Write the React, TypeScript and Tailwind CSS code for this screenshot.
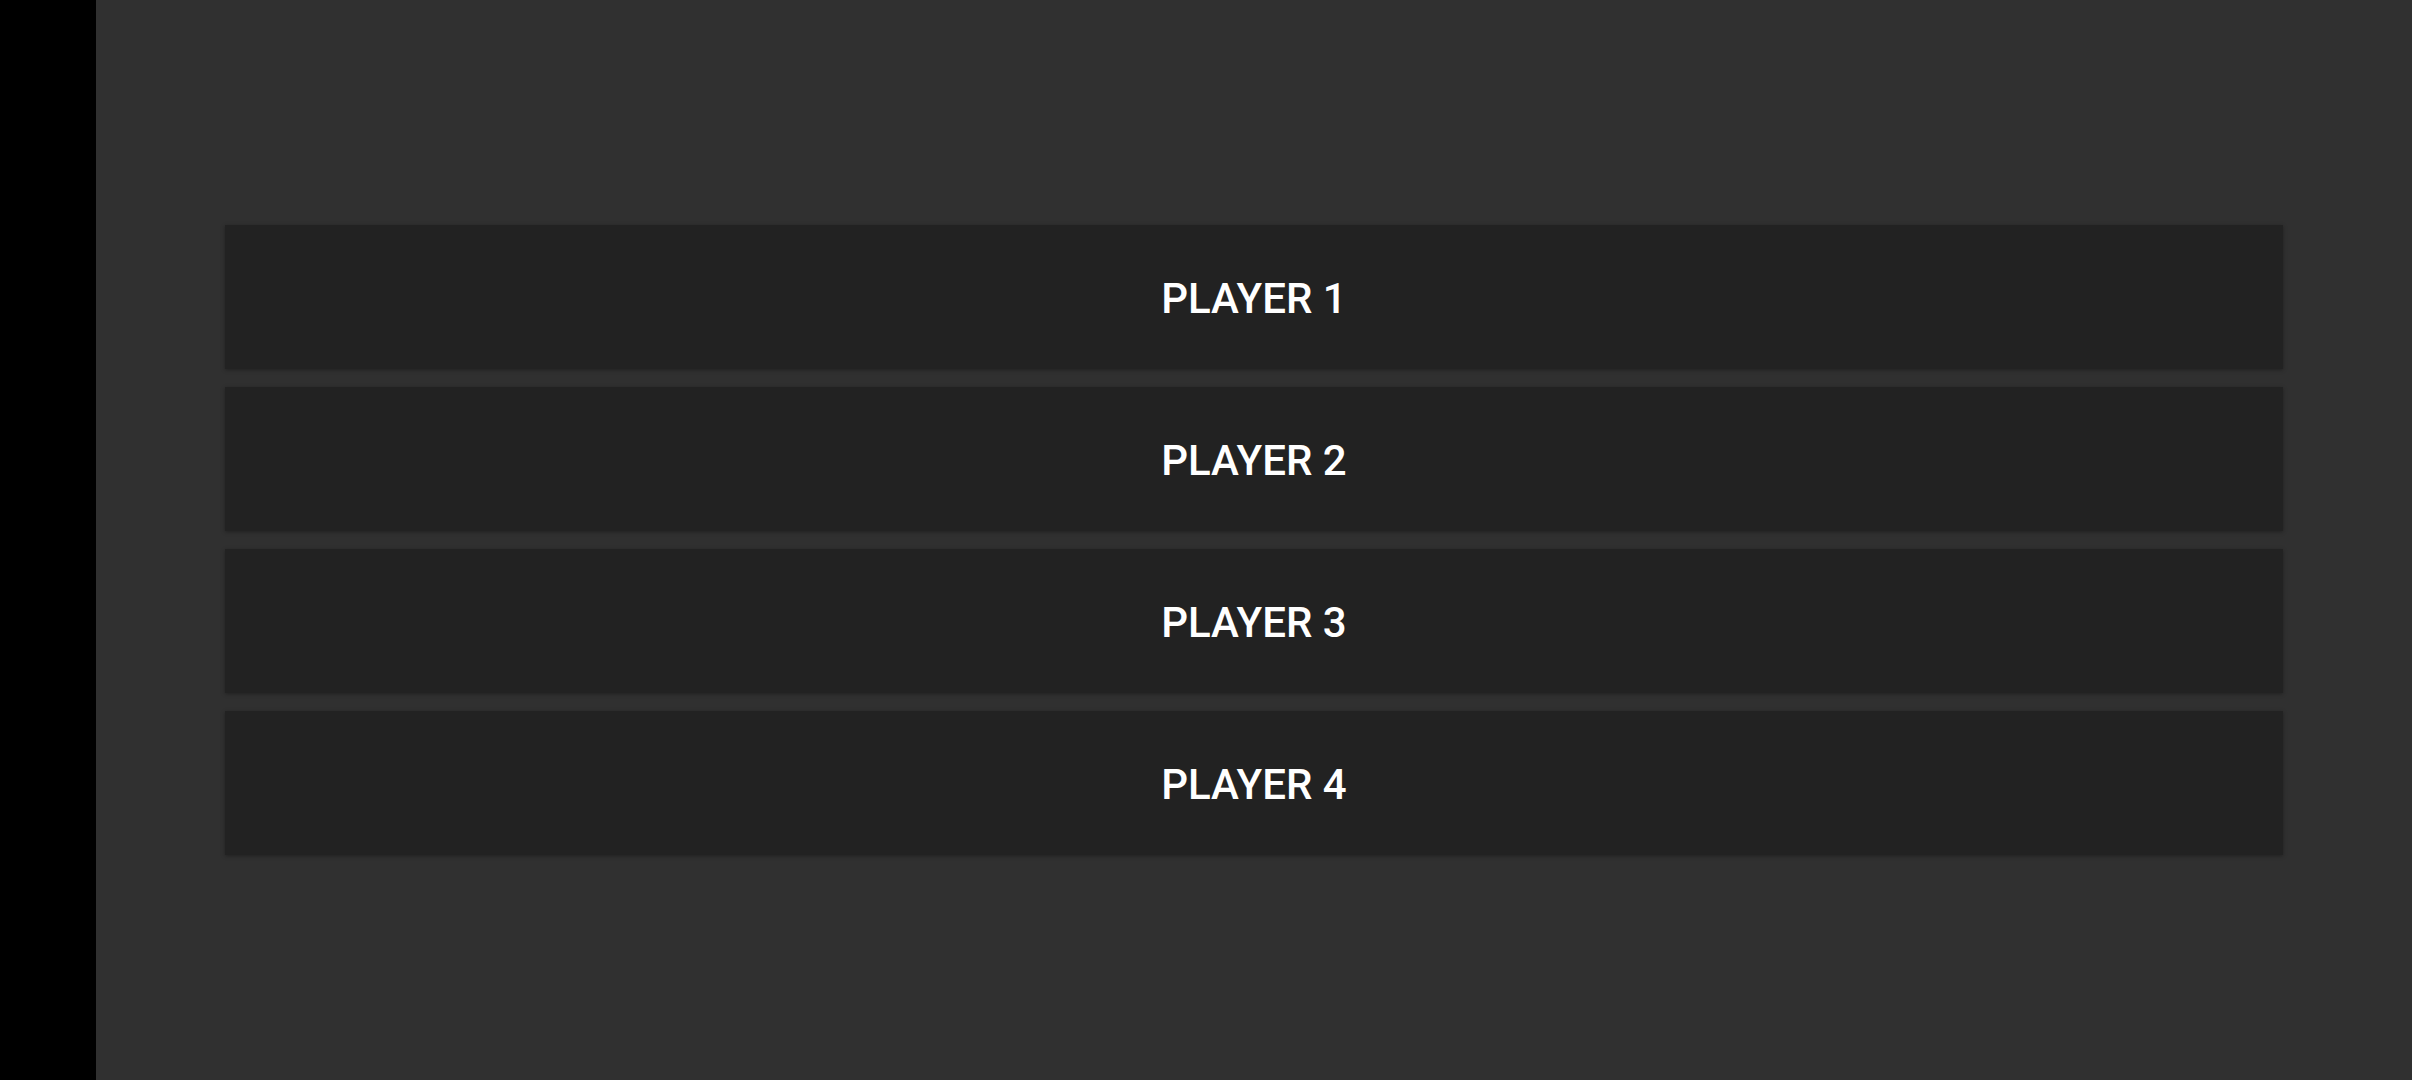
export default function App() {
    const players = ['PLAYER 1', 'PLAYER 2', 'PLAYER 3', 'PLAYER 4'];

    return (
        <div className="flex h-[1080px] w-[2412px] bg-black font-['Roboto',sans-serif]">
            <div className="w-[96px] shrink-0" />
            <div className="flex flex-1 flex-col justify-center gap-[18px] bg-[#303030] px-[129px]">
                {players.map(p => (
                    <button
                        key={p}
                        className="flex h-[144px] w-full items-center justify-center bg-[#222222] pt-[3px] text-[42px] font-medium text-white shadow-[0_1px_4px_rgba(0,0,0,0.35)]"
                    >
                        {p}
                    </button>
                ))}
            </div>
        </div>
    );
}
